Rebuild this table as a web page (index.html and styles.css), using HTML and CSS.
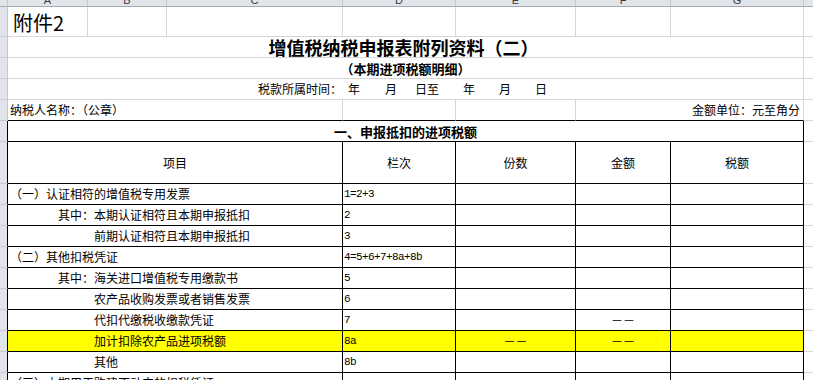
FILE: index.html
```html
<!DOCTYPE html>
<html lang="zh-CN">
<head>
<meta charset="utf-8">
<title>增值税纳税申报表附列资料（二）</title>
<link rel="stylesheet" href="styles.css">
</head>
<body>
<div class="sheet">
  <!-- column headers -->
  <div class="ch"></div>
  <div class="ch"><span>A</span></div>
  <div class="ch"><span>B</span></div>
  <div class="ch"><span>C</span></div>
  <div class="ch"><span>D</span></div>
  <div class="ch"><span>E</span></div>
  <div class="ch"><span>F</span></div>
  <div class="ch"><span>G</span></div>
  <div class="ch"></div>

  <!-- row 1 -->
  <div class="rh"></div>
  <div class="c attach">附件2</div>
  <div class="c"></div><div class="c"></div><div class="c"></div><div class="c"></div><div class="c"></div><div class="c"></div>
  <div class="c"></div>

  <!-- row 2 -->
  <div class="rh"></div>
  <div class="c s7 center title">增值税纳税申报表附列资料（二）</div>
  <div class="c"></div>

  <!-- row 3 -->
  <div class="rh"></div>
  <div class="c s7 center subtitle">（本期进项税额明细）</div>
  <div class="c"></div>

  <!-- row 4 -->
  <div class="rh"></div>
  <div class="c s7 center date"><span class="date-in">税款所属时间：<span class="m6">年</span><span class="m25">月</span><span class="m18">日至</span><span class="m24">年</span><span class="m24">月</span><span class="m24">日</span></span></div>
  <div class="c"></div>

  <!-- row 5 -->
  <div class="rh"></div>
  <div class="c bb s3 left">纳税人名称：（公章）</div>
  <div class="c bb"></div>
  <div class="c bb"></div>
  <div class="c bb s2 right">金额单位：元至角分</div>
  <div class="c"></div>

  <!-- row 6 -->
  <div class="rh tb"></div>
  <div class="t s7 center section">一、申报抵扣的进项税额</div>
  <div class="c"></div>

  <!-- row 7 header -->
  <div class="rh tb"></div>
  <div class="t s3 center">项目</div>
  <div class="t center">栏次</div>
  <div class="t center">份数</div>
  <div class="t center">金额</div>
  <div class="t center">税额</div>
  <div class="c"></div>

  <!-- data rows -->
  <div class="rh tb"></div>
  <div class="t s3 left">（一）认证相符的增值税专用发票</div>
  <div class="t num">1=2+3</div><div class="t"></div><div class="t"></div><div class="t"></div>
  <div class="c"></div>

  <div class="rh tb"></div>
  <div class="t s3 left ind1">其中：本期认证相符且本期申报抵扣</div>
  <div class="t num">2</div><div class="t"></div><div class="t"></div><div class="t"></div>
  <div class="c"></div>

  <div class="rh tb"></div>
  <div class="t s3 left ind2">前期认证相符且本期申报抵扣</div>
  <div class="t num">3</div><div class="t"></div><div class="t"></div><div class="t"></div>
  <div class="c"></div>

  <div class="rh tb"></div>
  <div class="t s3 left">（二）其他扣税凭证</div>
  <div class="t num">4=5+6+7+8a+8b</div><div class="t"></div><div class="t"></div><div class="t"></div>
  <div class="c"></div>

  <div class="rh tb"></div>
  <div class="t s3 left ind1">其中：海关进口增值税专用缴款书</div>
  <div class="t num">5</div><div class="t"></div><div class="t"></div><div class="t"></div>
  <div class="c"></div>

  <div class="rh tb"></div>
  <div class="t s3 left ind2">农产品收购发票或者销售发票</div>
  <div class="t num">6</div><div class="t"></div><div class="t"></div><div class="t"></div>
  <div class="c"></div>

  <div class="rh tb"></div>
  <div class="t s3 left ind2">代扣代缴税收缴款凭证</div>
  <div class="t num">7</div><div class="t"></div><div class="t center dash">－－</div><div class="t"></div>
  <div class="c"></div>

  <div class="rh tb"></div>
  <div class="t s3 left ind2 hl">加计扣除农产品进项税额</div>
  <div class="t num hl">8a</div><div class="t center dash hl">－－</div><div class="t center dash hl">－－</div><div class="t hl"></div>
  <div class="c"></div>

  <div class="rh tb"></div>
  <div class="t s3 left ind2">其他</div>
  <div class="t num">8b</div><div class="t"></div><div class="t"></div><div class="t"></div>
  <div class="c"></div>

  <div class="rh tb"></div>
  <div class="t s3 left">（三）本期用于购建不动产的扣税凭证</div>
  <div class="t num"></div><div class="t"></div><div class="t"></div><div class="t"></div>
  <div class="c"></div>
</div>
</body>
</html>
```

FILE: styles.css
```css
html, body {
  margin: 0;
  padding: 0;
  background: #ffffff;
}
body {
  width: 813px;
  height: 380px;
  overflow: hidden;
  font-family: "Noto Sans CJK SC", "Noto Sans", sans-serif;
  font-size: 12px;
  color: #000;
}
.sheet {
  display: grid;
  grid-template-columns: 8px 80px 79px 176px 113px 120px 95px 133px 60px;
  grid-template-rows: 7px 30px 21px 21px 21px 21px 21px 42px repeat(10, 21px);
  width: 873px;
}
.sheet > div {
  box-sizing: border-box;
  overflow: hidden;
  white-space: nowrap;
  display: flex;
  align-items: center;
  line-height: 1;
}
.ch {
  background: #e1e4e8;
  border-right: 1px solid #c3c7cd;
  border-bottom: 1px solid #a5abb3;
  justify-content: center;
  align-items: flex-end !important;
}
.ch span {
  font-family: "Liberation Sans", sans-serif;
  font-size: 11px;
  line-height: 11px;
  color: #3b3b3b;
  margin-bottom: 0;
}
.rh {
  background: #e1e4e8;
  border-right: 1px solid #c3c7cd;
  border-bottom: 1px solid #c9cdd2;
}
.rh.tb {
  border-right-color: #000;
}
.c {
  border-right: 1px solid #d6d6d6;
  border-bottom: 1px solid #d6d6d6;
}
.c.bb {
  border-bottom-color: #000;
}
.t {
  border-right: 1px solid #000;
  border-bottom: 1px solid #000;
}
.s2 { grid-column: span 2; }
.s3 { grid-column: span 3; }
.s7 { grid-column: span 7; }
.center { justify-content: center; }
.left { justify-content: flex-start; padding-left: 2px; }
.right { justify-content: flex-end; padding-right: 3px; }
.ind1 { padding-left: 50px; }
.ind2 { padding-left: 86px; }
.attach {
  font-size: 20px;
  padding-left: 5px;
  padding-top: 2px;
}
.title {
  font-size: 18px;
  font-weight: 700;
  padding-right: 4px;
}
.subtitle {
  font-size: 13px;
  font-weight: 700;
}
.section {
  font-size: 13px;
  font-weight: 700;
}
.date {
  padding-right: 6px;
}
.date-in {
  display: flex;
}
.m6 { margin-left: 6px; }
.m18 { margin-left: 18px; }
.m24 { margin-left: 24px; }
.m25 { margin-left: 25px; }
.num {
  font-family: "Liberation Mono", monospace;
  font-size: 11px;
  letter-spacing: -0.6px;
  padding-left: 1px;
}
.dash {
  font-size: 12px;
}
.hl {
  background: #ffff00;
}
```
